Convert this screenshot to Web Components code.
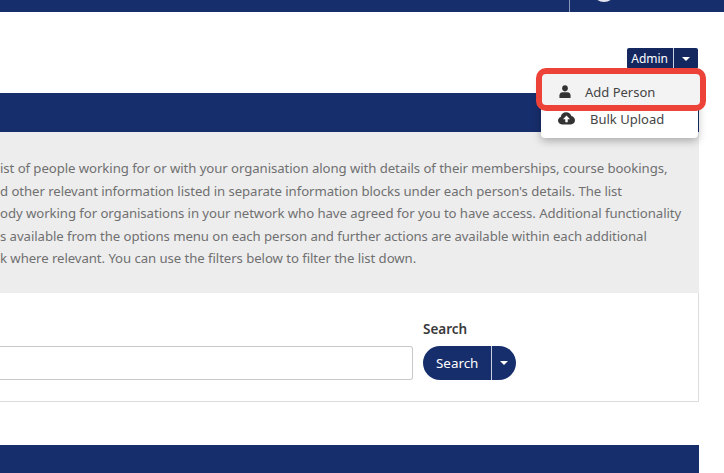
<!DOCTYPE html>
<html>
  <head>
    <meta charset="UTF-8" />
    <title>People</title>
    <style>
      html, body { margin: 0; padding: 0; background: #fff; }
      body { width: 724px; height: 473px; overflow: hidden; font-family: "Noto Sans", "Open Sans", sans-serif; }
    </style>
    <script>
      const NAVY = "#172e6c";

      function define(name, html) {
        customElements.define(name, class extends HTMLElement {
          constructor() {
            super();
            const template = document.createElement("template");
            template.innerHTML = html;
            this.attachShadow({ mode: "open" }).appendChild(template.content.cloneNode(true));
          }
        });
      }

      // Barra superior
      define("top-bar", `
        <style>
          :host { display: flex; justify-content: flex-end; height: 12px; background: ${NAVY}; overflow: hidden; }
          .user { width: 155px; border-left: 1px solid #8b98ba; display: flex; padding-left: 22px; box-sizing: border-box; }
          .avatar { width: 24px; height: 24px; border-radius: 50%; background: #e3e6ee; margin-top: -22px; }
        </style>
        <div class="user"><div class="avatar"></div></div>
      `);

      define("split-button", `
        <style>
          :host { display: inline-flex; background: #14275f; color: #fff; font-size: 12px; }
          :host([pill]) { background: ${NAVY}; border-radius: 17px; font-size: 13.4px; height: 34px; overflow: hidden; }
          :host(:not([pill])) { border-radius: 2px; height: 21px; }
          .main { display: flex; align-items: center; padding: 0 5px 0 4.500px; border-right: 1px solid #c9d0e2; }
          :host([pill]) .main { padding: 0 13px 0 13px; }
          .caret { display: flex; align-items: center; justify-content: center; width: 24px; }
          .caret i { border: 4px solid transparent; border-top-color: #fff; border-bottom-width: 0; }
        </style>
        <div class="main"><slot></slot></div>
        <div class="caret"><i></i></div>
      `);

      define("menu-item", `
        <style>
          :host { display: flex; align-items: center; height: 27px; color: #444; font-size: 13px; }
          .icon { display: flex; justify-content: center; width: 40px; padding-left: 4px; }
          :host([wide]) .icon { width: 49px; padding-left: 1px; margin-right: -1px; }
        </style>
        <div class="icon"><slot name="icon"></slot></div>
        <slot></slot>
      `);

      // Menú desplegable con el resaltado rojo encima
      define("drop-menu", `
        <style>
          :host { position: absolute; left: 541px; top: 76px; width: 157px; height: 62px; background: #fff; border-radius: 0 0 4px 4px; box-shadow: 0 3px 8px rgba(0,0,0,.28); }
          .list { position: relative; display: flex; flex-direction: column; padding-top: 2px; }
          .ring { position: absolute; left: -5px; top: -8px; width: 170px; height: 43px; box-sizing: border-box; border: 6px solid #ed4238; border-radius: 10px; }
          .fill { position: absolute; left: 0; top: -3px; width: 159px; height: 32px; background: #f3f3f4; }
        </style>
        <div class="fill"></div>
        <div class="list"><slot></slot></div>
        <div class="ring"></div>
      `);

      define("blue-band", `
        <style>
          :host { display: block; background: ${NAVY}; }
        </style>
        <slot></slot>
      `);

      define("intro-text", `
        <style>
          :host { display: block; box-sizing: border-box; height: 161px; background: #ededee; color: #707070; padding: 25px 0 0 0; font-size: 13.2px; letter-spacing: -0.07px; line-height: 22.5px; white-space: nowrap; overflow: hidden; }
        </style>
        <slot></slot>
      `);

      define("search-card", `
        <style>
          :host { display: flex; box-sizing: border-box; height: 109px; background: #fff; border: 1px solid #dcdcdc; border-width: 0 1px 1px 0; padding: 27px 0 0 0; gap: 10px; font-size: 13.5px; }
          .input { width: 413px; height: 34px; margin-top: 26px; box-sizing: border-box; background: #fff; border: 1px solid #c8c8c8; border-left: 0; border-radius: 0 3px 3px 0; }
          .field { display: flex; flex-direction: column; gap: 8px; }
          label { color: #3a3a3a; font-weight: 600; line-height: 18px; }
        </style>
        <div class="input"></div>
        <div class="field">
          <label>Search</label>
          <div><slot></slot></div>
        </div>
      `);

      define("page-body", `
        <style>
          :host { display: block; width: 699px; }
          .actions { display: flex; justify-content: flex-end; height: 37px; padding-top: 36px; margin-right: 1px; }
          .head { display: block; height: 39px; margin-top: 8px; }
          .foot { display: block; height: 40px; margin-top: 43px; }
        </style>
        <div class="actions"><slot name="actions"></slot></div>
        <blue-band class="head"></blue-band>
        <slot></slot>
        <blue-band class="foot"></blue-band>
      `);
    </script>
  </head>
  <body>
    <top-bar></top-bar>
    <page-body>
      <split-button slot="actions">Admin</split-button>
      <intro-text>ist of people working for or with your organisation along with details of their memberships, course bookings,<br>d other relevant information listed in separate information blocks under each person's details. The list<br>ody working for organisations in your network who have agreed for you to have access. Additional functionality<br>s available from the options menu on each person and further actions are available within each additional<br>k where relevant. You can use the filters below to filter the list down.</intro-text>
      <search-card><split-button pill>Search</split-button></search-card>
    </page-body>
    <drop-menu>
      <menu-item>
        <svg slot="icon" width="12" height="13" viewBox="0 0 14 14" preserveAspectRatio="none" fill="#333"><circle cx="7" cy="3.6" r="3.3"/><path d="M.5 14v-2.6C.5 9 2.2 7.800 4 7.800h6c1.800 0 3.500 1.200 3.500 3.600V14z"/></svg>
        Add Person
      </menu-item>
      <menu-item wide>
        <svg slot="icon" width="17" height="13" viewBox="0 0 17 13" fill="#333"><path fill-rule="evenodd" d="M4 12.500C1.800 12.500 0 10.800 0 8.600 0 6.900 1.100 5.400 2.700 4.900 3.100 2.200 5.400.2 8.200.2c2.400 0 4.500 1.500 5.200 3.700 1.900.4 3.600 2.200 3.600 4.400 0 2.300-1.900 4.200-4.200 4.200zM8.500 3.500 5 7.200h2.300v3h2.400v-3H12z"/></svg>
        Bulk Upload
      </menu-item>
    </drop-menu>
  </body>
</html>
